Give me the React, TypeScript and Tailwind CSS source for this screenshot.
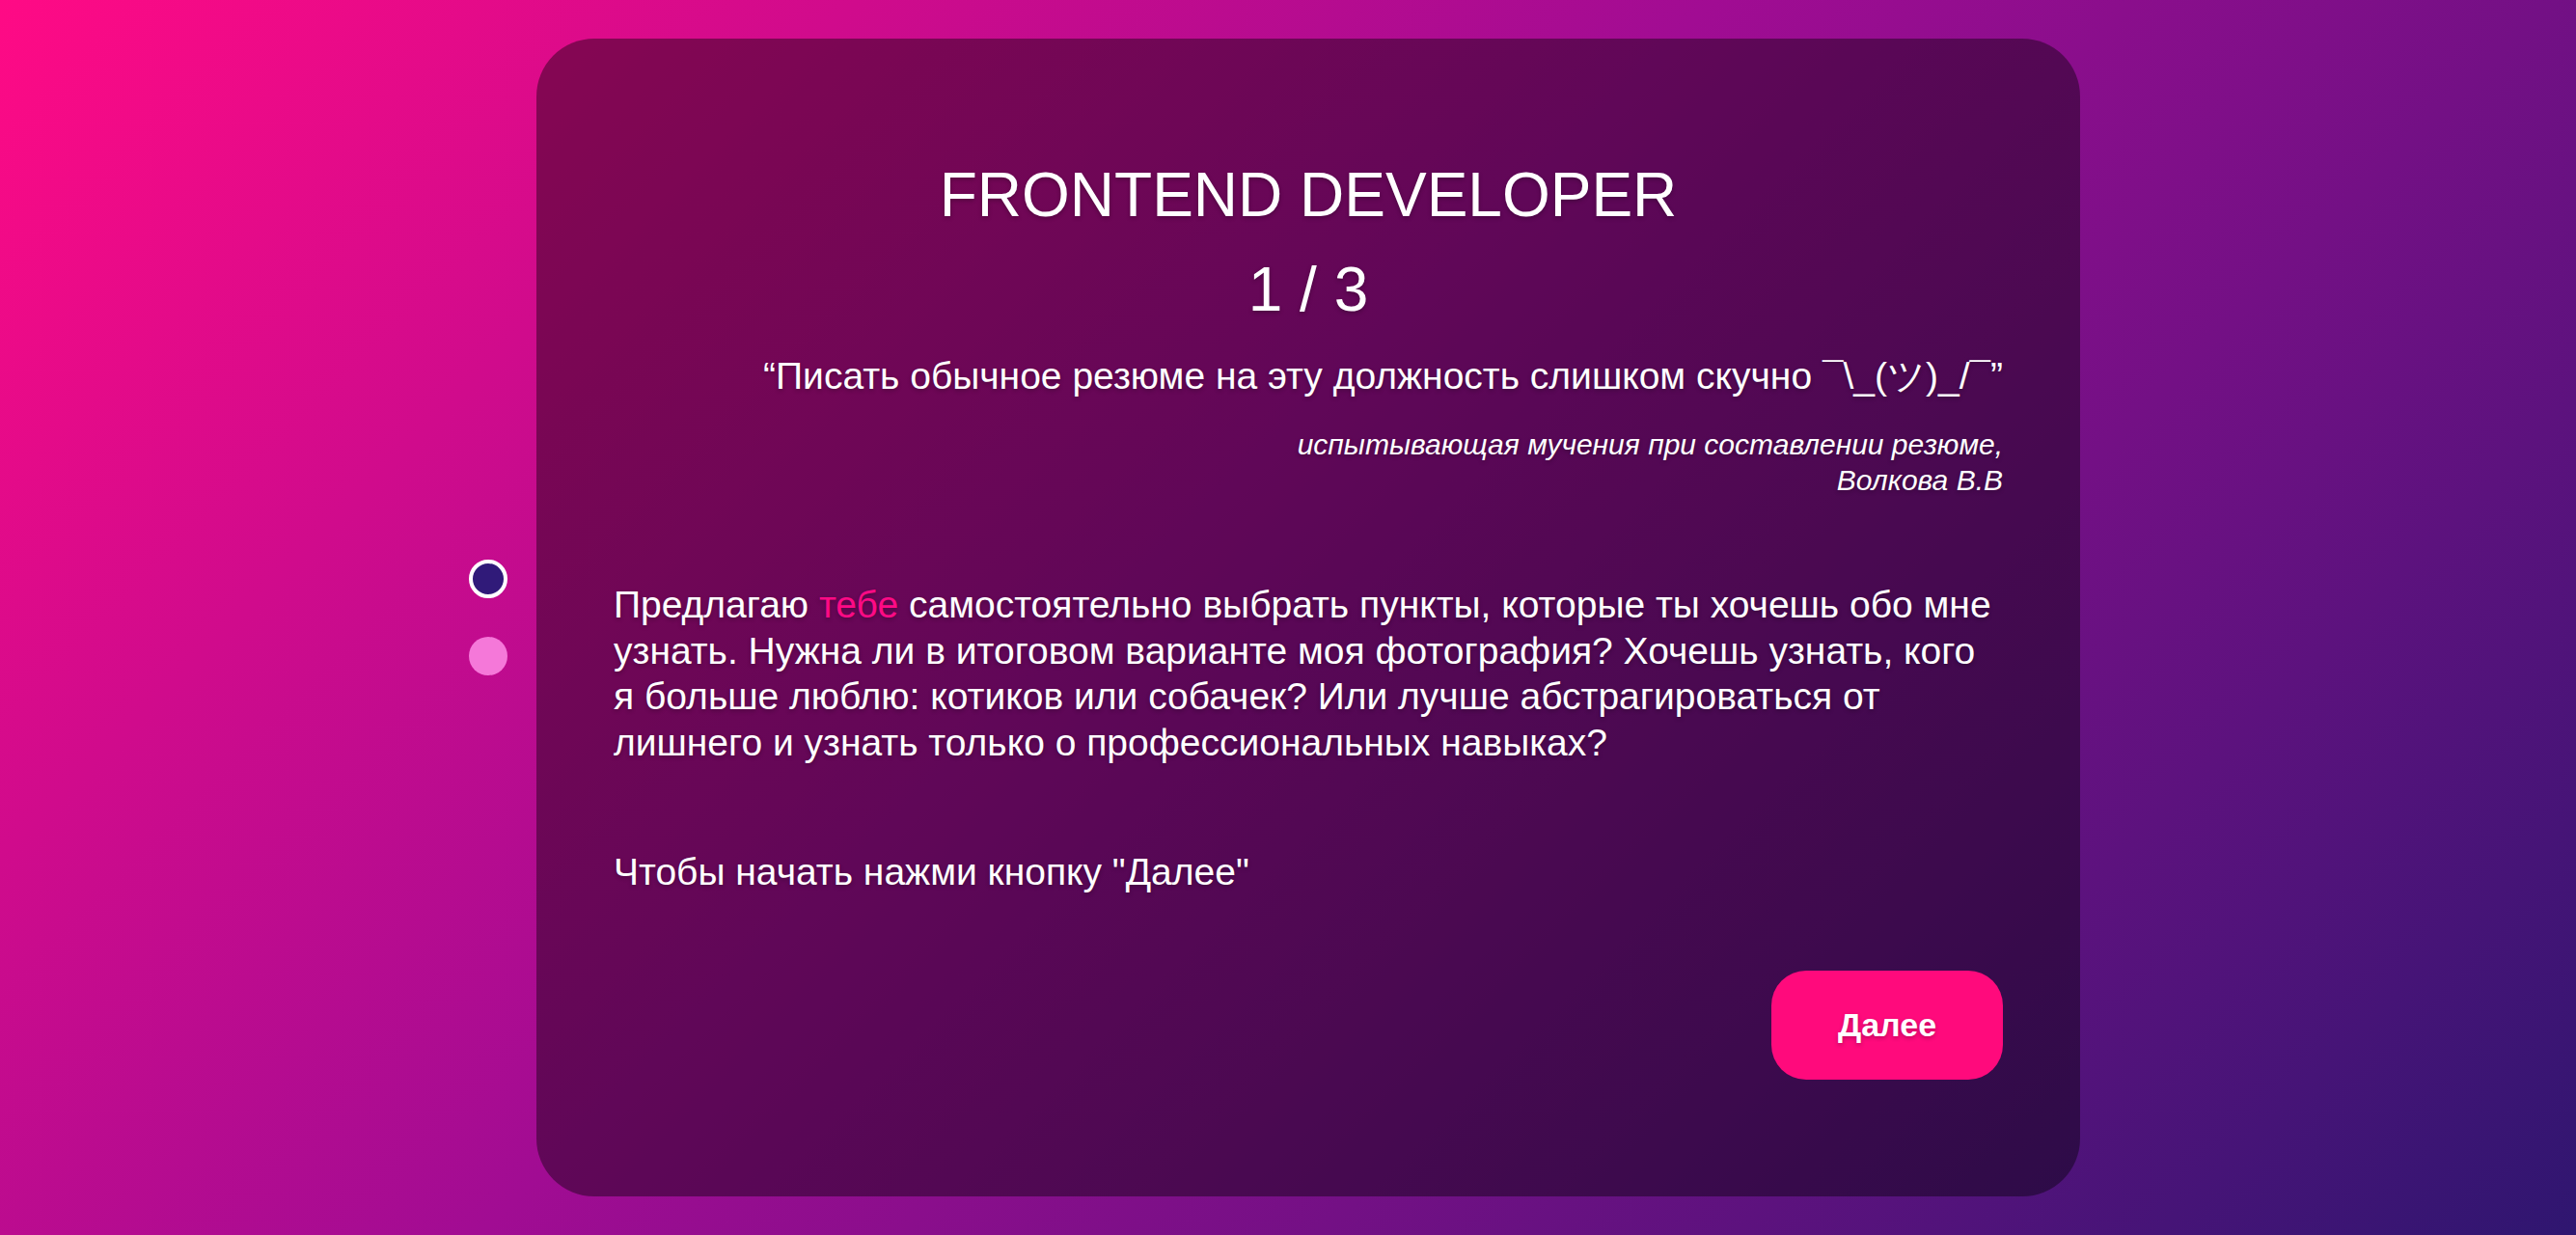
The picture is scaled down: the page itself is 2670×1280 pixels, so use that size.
import React from "react";

const shadow = "[text-shadow:0_2px_4px_rgba(0,0,0,0.25)]";

export default function App() {
  return (
    <div
      className="w-full h-[1280px] overflow-hidden bg-[linear-gradient(135deg,#ff0a85_0%,#a10c93_45%,#2f1670_100%)] flex flex-row items-center pl-[486px] text-white"
      style={{ fontFamily: '"Liberation Sans", Arial, sans-serif' }}
    >
      <div className="flex flex-col gap-[40px] w-[40px] shrink-0">
        <div className="w-[40px] h-[40px] rounded-full border-[4px] border-white bg-[#301a79]" />
        <div className="w-[40px] h-[40px] rounded-full bg-[#f578d9]" />
      </div>
      <div className="ml-[30px] w-[1600px] h-[1200px] shrink-0 rounded-[60px] bg-black/40 px-[80px] pt-[124px] flex flex-col">
        <h1 className={`text-center text-[64px] leading-[76px] font-normal ${shadow}`}>FRONTEND DEVELOPER</h1>
        <h2 className={`mt-[22px] text-center text-[64px] leading-[76px] font-normal ${shadow}`}>1 / 3</h2>
        <p className={`mt-[30px] text-right text-[39px] leading-[44px] whitespace-nowrap ${shadow}`}>
          “Писать обычное резюме на эту должность слишком скучно ¯\_(ツ)_/¯”
        </p>
        <p className={`mt-[30px] text-right italic text-[30px] leading-[37px] ${shadow}`}>
          испытывающая мучения при составлении резюме,
          <br />
          Волкова В.В
        </p>
        <p className={`mt-[87px] text-[39px] leading-[47.5px] ${shadow}`}>
          <span className="block whitespace-nowrap">
            Предлагаю <span className="text-[#ff0a85]">тебе</span> самостоятельно выбрать пункты, которые ты хочешь обо мне
          </span>
          <span className="block whitespace-nowrap">
            узнать. Нужна ли в итоговом варианте моя фотография? Хочешь узнать, кого
          </span>
          <span className="block whitespace-nowrap">
            я больше люблю: котиков или собачек? Или лучше абстрагироваться от
          </span>
          <span className="block whitespace-nowrap">
            лишнего и узнать только о профессиональных навыках?
          </span>
        </p>
        <p className={`mt-[87px] text-[39px] leading-[47.5px] whitespace-nowrap ${shadow}`}>Чтобы начать нажми кнопку "Далее"</p>
        <div className="mt-[78px] flex justify-end">
          <button className={`w-[240px] h-[113px] rounded-[36px] bg-[#ff0a7c] text-white text-[34px] font-bold ${shadow}`}>
            Далее
          </button>
        </div>
      </div>
    </div>
  );
}
